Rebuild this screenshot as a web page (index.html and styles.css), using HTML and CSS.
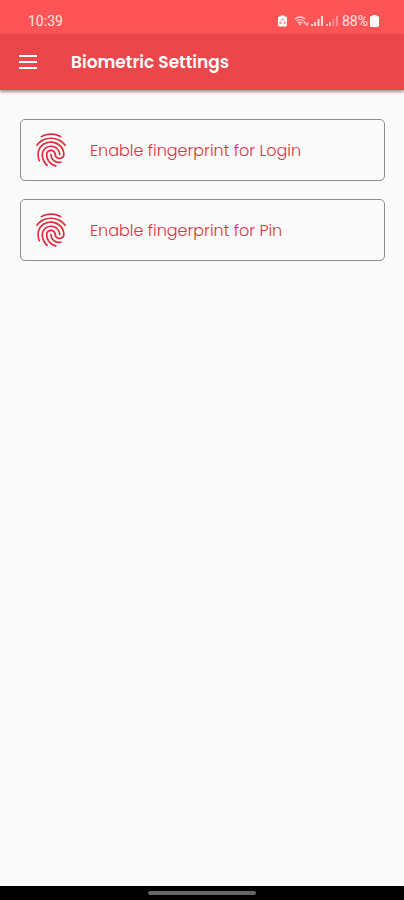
FILE: index.html
```html
<!DOCTYPE html>
<html lang="en">

<head>
    <meta charset="UTF-8">
    <meta name="viewport" content="width=device-width, initial-scale=1.0">
    <title>Biometric Settings</title>
    <link rel="stylesheet" href="styles.css">
</head>

<body>
    <div class="status-bar">
        <span class="time">10:39</span>
        <div class="status-icons">
            <svg class="saver" width="9" height="12" viewBox="0 0 10 12">
                <path fill="#fff" d="M3 0h4v1h1.500q1.500 0 1.500 1.500v8q0 1.500-1.500 1.500h-7q-1.500 0-1.500-1.500v-8q0-1.500 1.500-1.500h1.500z" />
                <path fill="none" stroke="#ff5456" d="M3.500 5.500l1.500-2 1.500 2M2.500 6.500l-.5 2h2M7.500 6.500l.5 2h-2" />
            </svg>
            <svg class="wifi" width="15" height="12" viewBox="0 0 15 12">
                <path fill="none" stroke="#ffd0d0" stroke-width="1.300" d="M1 4q5-4 10 0M2.500 6q3.500-2.800 7 0M4 8q2-1.600 4 0" />
                <path fill="#ffd0d0" d="M4.500 8.500h3l-1.500 2zM9 8l2-2 1 3zM11 10l3.500-3-.5 3.500z" />
            </svg>
            <svg class="signal" width="13" height="12" viewBox="0 0 13 12">
                <path fill="#ffd8d8" d="M0 9h2v2h-2zM3 7h2v4h-2zM6.500 4h2v7h-2zM10 1h2v10h-2z" />
            </svg>
            <svg class="signal" width="13" height="12" viewBox="0 0 13 12">
                <path fill="#ffc4c4" d="M0 9h2v2h-2zM3 7h2v4h-2z" />
                <path fill="#ff8c8c" d="M6.500 4h2v7h-2zM10 1h2v10h-2z" />
            </svg>
            <span class="percent">88%</span>
            <svg width="9" height="12" viewBox="0 0 9 12">
                <path fill="#fff" d="M2.500 0h4v1h1q1.500 0 1.500 1.500v8q0 1.500-1.500 1.500h-6q-1.500 0-1.500-1.500v-8q0-1.500 1.500-1.500h1z" />
            </svg>
        </div>
    </div>

    <header class="app-bar">
        <button class="menu-btn" type="button" aria-label="Menu">
            <svg width="18" height="14" viewBox="0 0 18 14">
                <path fill="#fff" d="M0 0h18v2h-18zM0 6h18v2h-18zM0 12h18v2h-18z" />
            </svg>
        </button>
        <h1>Biometric Settings</h1>
    </header>

    <!-- shared fingerprint icon -->
    <svg class="sprite" aria-hidden="true">
        <symbol id="finger" viewBox="0 0 24 24">
            <path d="M17.810 4.470c-.08 0-.16-.02-.23-.06C15.660 3.420 14 3 12.010 3c-1.980 0-3.860.47-5.570 1.410-.24.13-.54.04-.68-.2-.13-.24-.04-.55.2-.68C7.820 2.520 9.860 2 12.010 2c2.130 0 3.990.47 6.030 1.520.25.13.34.43.21.67-.09.18-.26.28-.44.28zM3.500 9.720c-.1 0-.2-.03-.29-.09-.23-.16-.28-.47-.12-.7.99-1.400 2.250-2.500 3.750-3.270C9.980 4.040 14 4.030 17.150 5.650c1.500.77 2.760 1.860 3.750 3.250.16.22.11.54-.12.7-.23.16-.54.11-.7-.12-.9-1.260-2.040-2.250-3.390-2.940-2.870-1.470-6.540-1.470-9.400.01-1.360.7-2.500 1.700-3.400 2.960-.08.14-.23.21-.39.21zM9.750 21.790c-.13 0-.26-.05-.35-.15-.87-.87-1.340-1.430-2.010-2.640-.69-1.230-1.050-2.730-1.050-4.340 0-2.970 2.540-5.390 5.660-5.390s5.660 2.420 5.660 5.390c0 .28-.22.5-.5.5s-.5-.22-.5-.5c0-2.420-2.090-4.390-4.660-4.390-2.570 0-4.660 1.970-4.660 4.390 0 1.440.32 2.770.93 3.850.64 1.150 1.080 1.640 1.850 2.420.19.2.19.51 0 .71-.11.1-.24.15-.37.15zM16.920 19.940c-1.190 0-2.240-.3-3.100-.89-1.490-1.010-2.380-2.650-2.380-4.390 0-.28.22-.5.5-.5s.5.22.5.5c0 1.410.72 2.740 1.940 3.560.71.48 1.540.71 2.540.71.24 0 .64-.03 1.040-.1.27-.05.53.13.58.41.05.27-.13.53-.41.58-.57.11-1.070.12-1.210.12zM14.910 22c-.04 0-.09-.01-.13-.02-1.590-.44-2.630-1.030-3.720-2.100-1.400-1.390-2.170-3.240-2.170-5.220 0-1.620 1.380-2.940 3.080-2.940 1.700 0 3.080 1.320 3.080 2.940 0 1.070.93 1.940 2.080 1.940s2.080-.87 2.080-1.940c0-3.770-3.250-6.830-7.250-6.830-2.840 0-5.440 1.580-6.610 4.030-.39.81-.59 1.760-.59 2.800 0 .78.07 2.010.67 3.610.1.26-.03.55-.29.64-.26.1-.55-.04-.64-.29-.49-1.310-.73-2.610-.73-3.960 0-1.200.23-2.290.68-3.240 1.330-2.790 4.280-4.600 7.510-4.600 4.550 0 8.250 3.510 8.250 7.830 0 1.620-1.380 2.940-3.080 2.940s-3.080-1.320-3.080-2.940c0-1.070-.93-1.940-2.080-1.940s-2.080.87-2.080 1.940c0 1.710.66 3.310 1.870 4.510.95.94 1.860 1.460 3.270 1.850.27.07.42.35.35.61-.05.23-.26.38-.47.38z" />
        </symbol>
    </svg>

    <main class="content">
        <button class="option" type="button">
            <svg class="finger"><use href="#finger" /></svg>
            <span>Enable fingerprint for Login</span>
        </button>
        <button class="option" type="button">
            <svg class="finger"><use href="#finger" /></svg>
            <span>Enable fingerprint for Pin</span>
        </button>
    </main>

    <div class="nav-bar">
        <div class="handle"></div>
    </div>
</body>

</html>
```

FILE: styles.css
```css
* {
    box-sizing: border-box;
}

body {
    margin: 0;
    min-height: 100vh;
    display: flex;
    flex-direction: column;
    background: #fafafa;
    font-family: Poppins, Inter, sans-serif;
}

.status-bar {
    height: 34px;
    padding: 8px 25px 0 28px;
    display: flex;
    align-items: center;
    justify-content: space-between;
    background: #ff5456;
    color: #ffe4e4;
    font-family: Roboto, sans-serif;
    font-size: 14px;
}

.status-icons {
    display: flex;
    align-items: center;
    gap: 2px;
}

.saver {
    margin-right: 5px;
}

.percent {
    margin-left: 1px;
}

.app-bar {
    height: 56px;
    padding: 0 19px;
    display: flex;
    align-items: center;
    gap: 34px;
    background: #eb464b;
    box-shadow: 0 2px 3px rgba(0, 0, 0, 0.4);
}

.menu-btn {
    padding: 0;
    border: 0;
    background: none;
    display: flex;
    cursor: pointer;
}

h1 {
    margin: 0;
    color: #fff;
    font-size: 17px;
    font-weight: 600;
}

.sprite {
    display: none;
}

.content {
    flex: 1;
    padding: 29px 19px 0 20px;
    display: flex;
    flex-direction: column;
    gap: 18px;
}

.option {
    height: 62px;
    padding: 0 10px;
    display: flex;
    align-items: center;
    gap: 19px;
    border: 1px solid #8c8c8c;
    border-radius: 5px;
    background: #fafafa;
    color: #dc3440;
    font-family: inherit;
    font-size: 16px;
    font-weight: 300;
    text-align: left;
    cursor: pointer;
}

.finger {
    width: 40px;
    height: 40px;
    fill: #d92b3a;
}

.nav-bar {
    height: 14px;
    display: flex;
    align-items: center;
    justify-content: center;
    background: #000;
}

.handle {
    width: 108px;
    height: 4px;
    border-radius: 2px;
    background: #666;
}
```
